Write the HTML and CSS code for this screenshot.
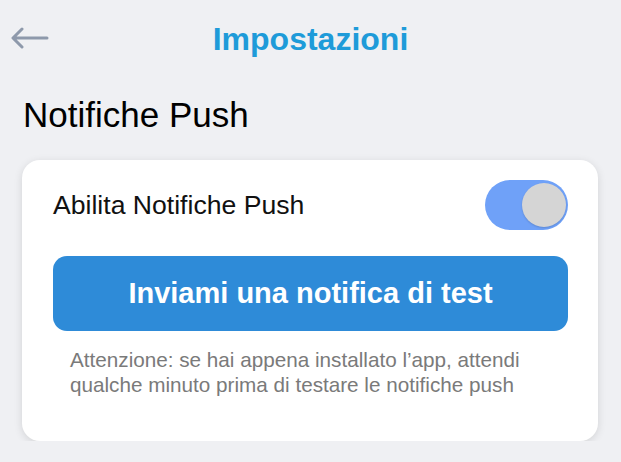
FILE: index.html
```html
<!DOCTYPE html>
<html lang="it">
<head>
<meta charset="utf-8">
<link rel="stylesheet" href="styles.css">
</head>
<body>
<header class="header">
  <button class="back" aria-label="Indietro">
    <svg width="38" height="22" viewBox="0 0 38 22" fill="none" stroke="#8e99ab" stroke-width="3" stroke-linecap="round" stroke-linejoin="round">
      <path d="M36 11H3M11 2L2 11l9 9"/>
    </svg>
  </button>
  <h1 class="title">Impostazioni</h1>
  <span></span>
</header>
<h2 class="section-title">Notifiche Push</h2>
<section class="card">
  <div class="row">
    <span class="row-label">Abilita Notifiche Push</span>
    <span class="toggle"><span class="knob"></span></span>
  </div>
  <button class="test-btn">Inviami una notifica di test</button>
  <p class="note">Attenzione: se hai appena installato l’app, attendi qualche minuto prima di testare le notifiche push</p>
</section>
</body>
</html>
```
FILE: styles.css
```css
html, body {
  margin: 0;
  padding: 0;
  background: #eff0f3;
  font-family: "Liberation Sans", Arial, sans-serif;
}
.header {
  display: grid;
  grid-template-columns: 60px 1fr 60px;
  align-items: center;
  height: 80px;
}
.back {
  background: none;
  border: 0;
  padding: 0 0 0 11px;
  display: flex;
  align-items: center;
  height: 22px;
  margin-top: -4px;
}
.title {
  margin: 0;
  text-align: center;
  font-size: 32px;
  font-weight: 700;
  color: #1e9bd9;
  margin-top: -1px;
}
.section-title {
  margin: 10px 0 0 23px;
  font-size: 35px;
  font-weight: 400;
  color: #000;
  line-height: 50px;
}
.card {
  margin: 20px 23px 0 22px;
  background: #fff;
  border-radius: 18px;
  box-shadow: 0 2px 8px rgba(0, 0, 0, 0.12);
  padding: 20px 30px 44px 31px;
}
.row {
  display: flex;
  align-items: center;
  justify-content: space-between;
  height: 50px;
}
.row-label {
  font-size: 26.6px;
  color: #111;
}
.toggle {
  width: 83px;
  height: 50px;
  border-radius: 25px;
  background: #6fa1f8;
  display: flex;
  align-items: center;
  justify-content: flex-end;
  padding-right: 2px;
  box-sizing: border-box;
}
.knob {
  width: 44px;
  height: 44px;
  border-radius: 50%;
  background: #d5d5d5;
  box-shadow: 0 1px 2px rgba(0, 0, 0, 0.15);
}
.test-btn {
  display: block;
  width: 100%;
  height: 75px;
  margin-top: 26px;
  border: 0;
  border-radius: 14px;
  background: #2e8bd8;
  color: #fff;
  font-family: "Liberation Sans", Arial, sans-serif;
  font-size: 29px;
  font-weight: 700;
}
.note {
  margin: 16px 0 0 17px;
  font-size: 20.7px;
  line-height: 25px;
  color: #7a7a7a;
}
```
